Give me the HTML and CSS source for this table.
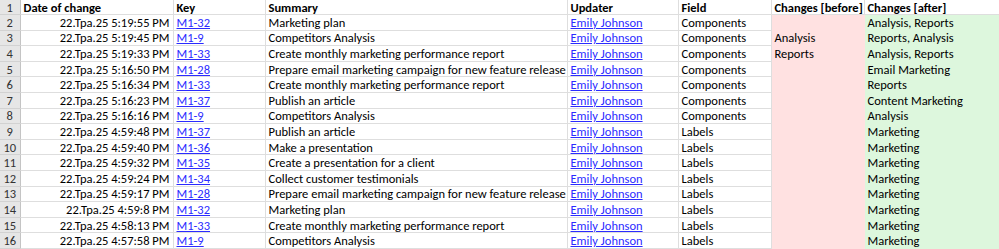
FILE: index.html
```html
<!DOCTYPE html>
<html>
<head>
<meta charset="utf-8">
<link rel="stylesheet" href="styles.css">
</head>
<body>
<table class="sheet">
<colgroup>
<col class="c-rh"><col class="c-a"><col class="c-b"><col class="c-c"><col class="c-d"><col class="c-e"><col class="c-f"><col class="c-g">
</colgroup>
<tbody>
<tr class="hdr"><th class="rh">1</th><td>Date of change</td><td>Key</td><td>Summary</td><td>Updater</td><td>Field</td><td>Changes [before]</td><td>Changes [after]</td></tr>
<tr><th class="rh">2</th><td class="num">22.Tpa.25 5:19:55 PM</td><td><a href="#">M1-32</a></td><td>Marketing plan</td><td><a href="#">Emily Johnson</a></td><td>Components</td><td class="bef"></td><td class="aft">Analysis, Reports</td></tr>
<tr><th class="rh">3</th><td class="num">22.Tpa.25 5:19:45 PM</td><td><a href="#">M1-9</a></td><td>Competitors Analysis</td><td><a href="#">Emily Johnson</a></td><td>Components</td><td class="bef">Analysis</td><td class="aft">Reports, Analysis</td></tr>
<tr><th class="rh">4</th><td class="num">22.Tpa.25 5:19:33 PM</td><td><a href="#">M1-33</a></td><td>Create monthly marketing performance report</td><td><a href="#">Emily Johnson</a></td><td>Components</td><td class="bef">Reports</td><td class="aft">Analysis, Reports</td></tr>
<tr><th class="rh">5</th><td class="num">22.Tpa.25 5:16:50 PM</td><td><a href="#">M1-28</a></td><td>Prepare email marketing campaign for new feature release</td><td><a href="#">Emily Johnson</a></td><td>Components</td><td class="bef"></td><td class="aft">Email Marketing</td></tr>
<tr><th class="rh">6</th><td class="num">22.Tpa.25 5:16:34 PM</td><td><a href="#">M1-33</a></td><td>Create monthly marketing performance report</td><td><a href="#">Emily Johnson</a></td><td>Components</td><td class="bef"></td><td class="aft">Reports</td></tr>
<tr><th class="rh">7</th><td class="num">22.Tpa.25 5:16:23 PM</td><td><a href="#">M1-37</a></td><td>Publish an article</td><td><a href="#">Emily Johnson</a></td><td>Components</td><td class="bef"></td><td class="aft">Content Marketing</td></tr>
<tr><th class="rh">8</th><td class="num">22.Tpa.25 5:16:16 PM</td><td><a href="#">M1-9</a></td><td>Competitors Analysis</td><td><a href="#">Emily Johnson</a></td><td>Components</td><td class="bef"></td><td class="aft">Analysis</td></tr>
<tr><th class="rh">9</th><td class="num">22.Tpa.25 4:59:48 PM</td><td><a href="#">M1-37</a></td><td>Publish an article</td><td><a href="#">Emily Johnson</a></td><td>Labels</td><td class="bef"></td><td class="aft">Marketing</td></tr>
<tr><th class="rh">10</th><td class="num">22.Tpa.25 4:59:40 PM</td><td><a href="#">M1-36</a></td><td>Make a presentation</td><td><a href="#">Emily Johnson</a></td><td>Labels</td><td class="bef"></td><td class="aft">Marketing</td></tr>
<tr><th class="rh">11</th><td class="num">22.Tpa.25 4:59:32 PM</td><td><a href="#">M1-35</a></td><td>Create a presentation for a client</td><td><a href="#">Emily Johnson</a></td><td>Labels</td><td class="bef"></td><td class="aft">Marketing</td></tr>
<tr><th class="rh">12</th><td class="num">22.Tpa.25 4:59:24 PM</td><td><a href="#">M1-34</a></td><td>Collect customer testimonials</td><td><a href="#">Emily Johnson</a></td><td>Labels</td><td class="bef"></td><td class="aft">Marketing</td></tr>
<tr><th class="rh">13</th><td class="num">22.Tpa.25 4:59:17 PM</td><td><a href="#">M1-28</a></td><td>Prepare email marketing campaign for new feature release</td><td><a href="#">Emily Johnson</a></td><td>Labels</td><td class="bef"></td><td class="aft">Marketing</td></tr>
<tr><th class="rh">14</th><td class="num">22.Tpa.25 4:59:8 PM</td><td><a href="#">M1-32</a></td><td>Marketing plan</td><td><a href="#">Emily Johnson</a></td><td>Labels</td><td class="bef"></td><td class="aft">Marketing</td></tr>
<tr><th class="rh">15</th><td class="num">22.Tpa.25 4:58:13 PM</td><td><a href="#">M1-33</a></td><td>Create monthly marketing performance report</td><td><a href="#">Emily Johnson</a></td><td>Labels</td><td class="bef"></td><td class="aft">Marketing</td></tr>
<tr><th class="rh">16</th><td class="num">22.Tpa.25 4:57:58 PM</td><td><a href="#">M1-9</a></td><td>Competitors Analysis</td><td><a href="#">Emily Johnson</a></td><td>Labels</td><td class="bef"></td><td class="aft">Marketing</td></tr>
<tr><th class="rh"></th><td></td><td></td><td></td><td></td><td></td><td></td><td></td></tr>
</tbody>
</table>
</body>
</html>
```
FILE: styles.css
```css
html, body {
  margin: 0;
  padding: 0;
  background: #ffffff;
  overflow: hidden;
}
.sheet {
  border-collapse: collapse;
  table-layout: fixed;
  width: 1000px;
  font-family: "Carlito", "Lato", "Liberation Sans", sans-serif;
  font-size: 12.5px;
  color: #000;
}
.c-rh { width: 20px; }
.c-a { width: 153px; }
.c-b { width: 92px; }
.c-c { width: 302px; }
.c-d { width: 111px; }
.c-e { width: 93px; }
.c-f { width: 93px; }
.c-g { width: 136px; }
.sheet tr { height: 15.6px; }
.sheet tr.hdr { height: 14.6px; }
.sheet td, .sheet th {
  padding: 0 3px;
  border: 1px solid #dedede;
  white-space: nowrap;
  overflow: hidden;
  line-height: 13px;
  text-align: left;
  vertical-align: middle;
}
.sheet tr:first-child td, .sheet tr:first-child th { border-top: none; }
.sheet th.rh {
  background: #e6e6e6;
  color: #333;
  font-weight: normal;
  text-align: center;
  padding: 0;
  border-left: none;
  border-color: #d2d2d2;
  border-right: 1px solid #c4c4c4;
}
.hdr td { font-weight: bold; }
.sheet td.num { text-align: right; }
.sheet a {
  color: #2b2bff;
  text-decoration: underline;
}
.sheet td.bef {
  background: #ffe1e1;
  border-color: #ffe1e1;
}
.sheet td.aft {
  background: #ddf7dd;
  border-color: #ddf7dd;
}
```
